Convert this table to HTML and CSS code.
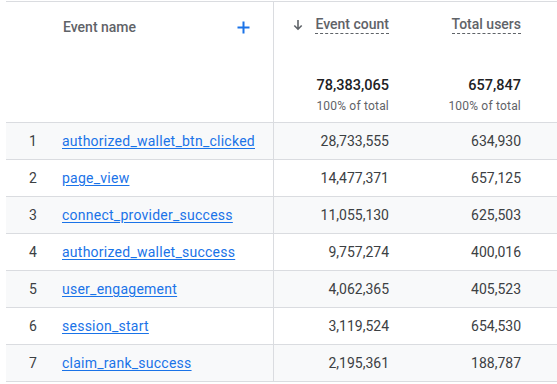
FILE: index.html
```html
<!DOCTYPE html>
<html>
<head>
<meta charset="utf-8">
<link rel="stylesheet" href="styles.css">
</head>
<body>
<div class="wrap">
<table class="tbl">
  <colgroup>
    <col class="c-idx"><col class="c-name"><col class="c-count"><col class="c-users">
  </colgroup>
  <thead>
    <tr class="head">
      <th class="h-idx"></th>
      <th class="h-name">
        <div class="h-name-in">
          <span>Event name</span>
          <svg class="plus" width="13" height="13" viewBox="0 0 13 13"><path d="M6.5 0.5v12M0.5 6.5h12" stroke="#1a73e8" stroke-width="2" fill="none"/></svg>
        </div>
      </th>
      <th class="h-num">
        <div class="h-title">
          <svg class="arrow" width="10" height="12" viewBox="0 0 10 12"><path d="M5 1v9M1.3 6.5L5 10.2 8.7 6.5" stroke="#5f6368" stroke-width="1.6" fill="none"/></svg>
          <span class="dash">Event count</span>
        </div>
        <div class="total">78,383,065</div>
        <div class="pct">100% of total</div>
      </th>
      <th class="h-num last">
        <div class="h-title"><span class="dash">Total users</span></div>
        <div class="total">657,847</div>
        <div class="pct">100% of total</div>
      </th>
    </tr>
  </thead>
  <tbody>
    <tr class="alt"><td class="idx">1</td><td class="name"><a href="#">authorized_wallet_btn_clicked</a></td><td class="num">28,733,555</td><td class="num last">634,930</td></tr>
    <tr><td class="idx">2</td><td class="name"><a href="#">page_view</a></td><td class="num">14,477,371</td><td class="num last">657,125</td></tr>
    <tr class="alt"><td class="idx">3</td><td class="name"><a href="#">connect_provider_success</a></td><td class="num">11,055,130</td><td class="num last">625,503</td></tr>
    <tr><td class="idx">4</td><td class="name"><a href="#">authorized_wallet_success</a></td><td class="num">9,757,274</td><td class="num last">400,016</td></tr>
    <tr class="alt"><td class="idx">5</td><td class="name"><a href="#">user_engagement</a></td><td class="num">4,062,365</td><td class="num last">405,523</td></tr>
    <tr><td class="idx">6</td><td class="name"><a href="#">session_start</a></td><td class="num">3,119,524</td><td class="num last">654,530</td></tr>
    <tr class="alt"><td class="idx">7</td><td class="name"><a href="#">claim_rank_success</a></td><td class="num">2,195,361</td><td class="num last">188,787</td></tr>
  </tbody>
</table>
</div>
</body>
</html>
```

FILE: styles.css
```css
html, body {
  margin: 0;
  padding: 0;
  background: #ffffff;
}
body {
  font-family: Roboto, "Liberation Sans", sans-serif;
  color: #202124;
}
.wrap {
  padding-top: 1px;
  padding-left: 6px;
}
.tbl {
  border-collapse: collapse;
  table-layout: fixed;
  width: 551px;
  border-top: 1px solid #dadce0;
}
.c-idx { width: 54px; }
.c-name { width: 213px; }
.c-count { width: 132px; }
.c-users { width: 152px; }

th, td {
  padding: 0;
  border-bottom: 1px solid #dadce0;
}
.head th {
  height: 120px;
  vertical-align: top;
  font-weight: 400;
}
.h-name, .name {
  border-right: 1px solid #dadce0;
}
.h-name-in {
  display: flex;
  align-items: center;
  justify-content: space-between;
  padding: 16px 23px 0 3px;
  height: 18px;
  font-size: 14px;
  font-weight: 500;
  color: #5f6368;
  text-align: left;
}
.plus { display: block; }
.h-num {
  text-align: right;
  padding-right: 16px;
}
.h-num.last { padding-right: 36px; }
.h-title {
  display: flex;
  justify-content: flex-end;
  align-items: center;
  gap: 12px;
  margin-top: 14px;
  font-size: 14px;
  font-weight: 500;
  color: #5f6368;
  height: 18px;
}
.arrow { display: block; }
.dash {
  border-bottom: 1px dashed #5f6368;
  padding-bottom: 1px;
  line-height: 16px;
}
.total {
  margin-top: 43px;
  font-size: 14.5px;
  font-weight: 500;
  line-height: 18px;
  color: #202124;
}
.pct {
  margin-top: 4px;
  font-size: 12px;
  line-height: 14px;
  letter-spacing: 0.2px;
  color: #5f6368;
}
tbody td {
  height: 36px;
  font-size: 14px;
  vertical-align: middle;
}
tr.alt td { background: #f8f9fa; }
.idx {
  text-align: center;
  color: #3c4043;
}
.name {
  padding-left: 2px;
  white-space: nowrap;
}
.name a {
  color: #1a73e8;
  text-decoration: underline;
  text-underline-offset: 2px;
  letter-spacing: 0.25px;
  font-weight: 400;
}
.num {
  text-align: right;
  padding-right: 16px;
  color: #3c4043;
}
.num.last { padding-right: 36px; }
```
